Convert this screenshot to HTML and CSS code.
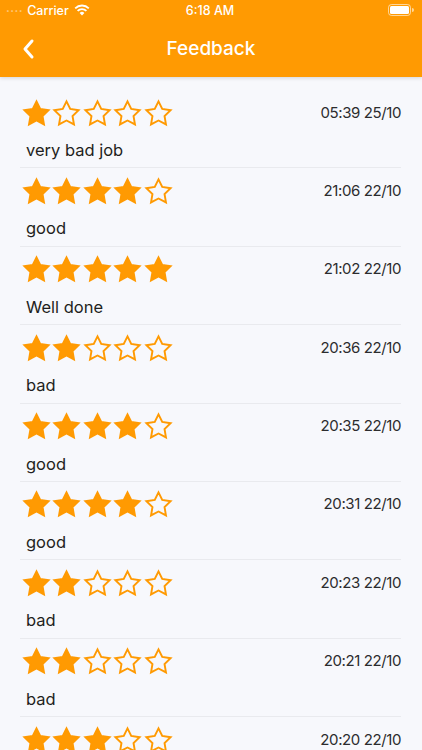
FILE: index.html
```html
<!DOCTYPE html>
<html>
<head>
  <title>Feedback</title>
  <link rel="stylesheet" href="styles.css">
</head>
<body>

  <!-- Header: status bar + navigation -->
  <div class="header">
    <div class="status-bar">
      <div class="status-left">
        <span class="signal">....</span>
        <span>Carrier</span>
        <svg class="wifi" width="16" height="12" viewBox="0 0 16 12">
          <path d="M8 11.5 L5.6 8.9 A3.4 3.4 0 0 1 10.4 8.9 Z" fill="#fff"/>
          <path d="M3.6 6.9 A6.2 6.2 0 0 1 12.4 6.9" stroke="#fff" stroke-width="1.8" fill="none"/>
          <path d="M1.2 4.3 A9.6 9.6 0 0 1 14.8 4.3" stroke="#fff" stroke-width="1.8" fill="none"/>
        </svg>
      </div>
      <div class="status-time">6:18 AM</div>
      <div class="status-right">
        <svg width="26" height="12" viewBox="0 0 26 12">
          <rect x="0.5" y="0.5" width="22" height="11" rx="3" stroke="#fff" stroke-opacity="0.6" fill="none"/>
          <rect x="2" y="2" width="19" height="8" rx="1.5" fill="#fff"/>
          <path d="M24 4 v4 a2 2 0 0 0 0 -4z" fill="#fff" fill-opacity="0.6"/>
        </svg>
      </div>
    </div>
    <div class="nav-bar">
      <svg class="back" width="14" height="22" viewBox="0 0 14 22">
        <path d="M11 3 L4 11 L11 19" stroke="#fff" stroke-width="3" fill="none" stroke-linecap="round" stroke-linejoin="round"/>
      </svg>
      <h1>Feedback</h1>
    </div>
  </div>

  <!-- Feedback list -->
  <div class="list" id="list"></div>

  <script>
    const feedback = [
      { stars: 1, time: "05:39 25/10", text: "very bad job" },
      { stars: 4, time: "21:06 22/10", text: "good" },
      { stars: 5, time: "21:02 22/10", text: "Well done" },
      { stars: 2, time: "20:36 22/10", text: "bad" },
      { stars: 4, time: "20:35 22/10", text: "good" },
      { stars: 4, time: "20:31 22/10", text: "good" },
      { stars: 2, time: "20:23 22/10", text: "bad" },
      { stars: 2, time: "20:21 22/10", text: "bad" },
      { stars: 3, time: "20:20 22/10", text: "" }
    ];

    const starPoints = "12,2 15.09,8.26 22,9.27 17,14.14 18.18,21.02 12,17.77 5.82,21.02 7,14.14 2,9.27 8.91,8.26";

    function starSvg(filled) {
      const cls = filled ? "star filled" : "star";
      return `<svg class="${cls}" viewBox="0 0 24 24"><polygon points="${starPoints}"/></svg>`;
    }

    const list = document.getElementById("list");
    feedback.forEach(item => {
      let stars = "";
      for (let i = 1; i <= 5; i++) {
        stars += starSvg(i <= item.stars);
      }
      const comment = item.text ? `<p class="comment">${item.text}</p>` : "";
      list.innerHTML += `
        <div class="row">
          <div class="row-top">
            <div class="stars">${stars}</div>
            <span class="time">${item.time}</span>
          </div>
          ${comment}
        </div>`;
    });
  </script>

</body>
</html>
```

FILE: styles.css
```css
body {
  margin: 0;
  background-color: #f7f8fc;
  font-family: Inter, "Noto Sans", sans-serif;
  overflow: hidden;
}

.header {
  background-color: #ff9a02;
  color: white;
  box-shadow: 0 1px 4px rgba(0, 0, 0, 0.15);
  position: relative;
  z-index: 1;
}

.status-bar {
  height: 20px;
  display: flex;
  align-items: center;
  justify-content: space-between;
  padding: 0 6px;
  font-size: 12.5px;
  font-weight: 500;
}

.status-left {
  display: flex;
  align-items: center;
  gap: 4px;
  width: 120px;
}

.signal {
  opacity: 0.5;
  letter-spacing: 0.5px;
  margin-top: -6px;
}

.wifi {
  margin-left: 1px;
}

.status-time {
  text-align: center;
}

.status-right {
  width: 120px;
  display: flex;
  justify-content: flex-end;
  padding-right: 2px;
}

.nav-bar {
  height: 57px;
  display: flex;
  align-items: center;
  justify-content: center;
  position: relative;
}

.back {
  position: absolute;
  left: 21px;
  top: 18px;
}

h1 {
  margin: 0;
  font-size: 19px;
  font-weight: 500;
}

.list {
  padding-top: 13px;
}

.row {
  margin: 0 21px 0 20px;
  height: 77.4px;
  border-bottom: 1px solid #e9eaee;
}

.row-top {
  display: flex;
  justify-content: space-between;
  align-items: center;
  height: 46px;
}

.stars {
  display: flex;
  gap: 1.5px;
  margin-left: 1.5px;
}

.star {
  width: 29px;
  height: 29px;
  fill: none;
  stroke: #ff9a02;
  stroke-width: 1.6;
  stroke-linejoin: miter;
}

.star.filled {
  fill: #ff9a02;
}

.time {
  font-size: 15px;
  color: #2c2c2e;
  margin-top: -2px;
  letter-spacing: -0.4px;
}

.comment {
  margin: 0 0 0 6px;
  font-size: 16.5px;
  color: #1f1f21;
  line-height: 28px;
}
```
